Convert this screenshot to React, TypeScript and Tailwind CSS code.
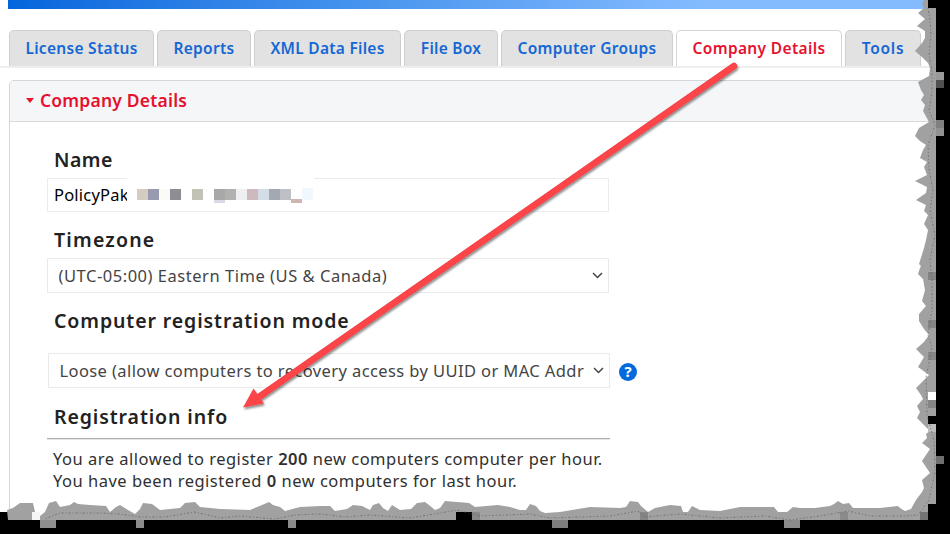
import React from "react";

const tabs = [
  { label: "License Status", box: "w-[145px]", tone: "tracking-[0.3px]" },
  { label: "Reports", box: "w-[94px]", tone: "tracking-[0.3px]" },
  { label: "XML Data Files", box: "w-[147px]", tone: "tracking-[0.27px]" },
  { label: "File Box", box: "w-[94px]", tone: "tracking-[0.25px]" },
  { label: "Computer Groups", box: "w-[172px]", tone: "tracking-[0.3px]" },
  { label: "Company Details", box: "w-[166px]", tone: "tracking-[0.35px]", active: true },
  { label: "Tools", box: "w-[76px]", tone: "tracking-[0.75px]" },
];

const redaction: [number, number, number, number, string][] = [
  [10, 11, 11, 11, "#d3ccc0"],
  [21, 11, 11, 11, "#989bb0"],
  [32, 11, 11, 11, "#fafaf7"],
  [43, 11, 11, 11, "#8e8d92"],
  [65, 11, 11, 11, "#c3c2b7"],
  [87, 11, 11, 11, "#a9a8a8"],
  [98, 11, 11, 11, "#b1b1b1"],
  [109, 11, 11, 11, "#eeeef3"],
  [120, 11, 11, 11, "#cdb9be"],
  [131, 11, 11, 11, "#d2dde8"],
  [142, 11, 11, 11, "#a4a8b2"],
  [153, 11, 11, 11, "#bfc0c5"],
  [175, 10, 11, 12, "#f0f8fe"],
  [87, 22, 11, 3, "#d9dae8"],
  [164, 21, 11, 4, "#cdb7b0"],
];

const tornInner =
  "M924 0 L922 4 L924 8 L918 13 L925 19 L917 26 L925 31 L925 38 L922 43 L915 51 L922 57 L928 63 L930 68 L929 76 L918 82 L921 90 L924 95 L921 100 L925 105 L923 111 L929 122 L919 128 L915 136 L920 141 L926 145 L923 150 L920 158 L927 162 L924 167 L927 175 L915 181 L927 187 L926 193 L916 200 L926 205 L924 211 L928 215 L924 224 L928 230 L926 240 L924 248 L919 264 L921 266 L920 268 L918 274 L923 279 L925 290 L922 301 L926 306 L919 314 L919 321 L924 329 L929 335 L924 342 L916 349 L924 357 L918 367 L929 375 L920 384 L916 388 L921 395 L923 399 L917 406 L920 412 L917 418 L926 427 L930 431 L926 434 L927 438 L922 443 L930 449 L922 461 L930 473 L922 480 L924 488 L922 492 L916 500 L911 509 L905 511 L900 508 L898 506 L880 508 L870 508 L853 508 L849 503 L843 504 L838 501 L834 504 L830 506 L815 508 L800 508 L793 507 L787 512 L778 512 L774 507 L740 507 L720 511 L700 510 L692 506 L688 512 L683 512 L681 506 L670 505 L655 508 L648 512 L641 506 L638 502 L630 501 L626 507 L620 508 L590 507 L560 512 L545 513 L540 511 L536 506 L530 504 L526 510 L520 510 L510 507 L498 505 L475 507 L469 503 L445 501 L440 508 L435 510 L429 505 L425 502 L417 503 L411 509 L400 510 L392 505 L388 511 L383 508 L379 503 L373 505 L370 510 L362 506 L353 505 L347 509 L335 511 L330 506 L320 506 L300 507 L285 511 L280 507 L273 505 L269 502 L262 505 L250 510 L220 509 L200 507 L195 502 L185 503 L180 508 L160 510 L152 504 L143 503 L140 509 L135 514 L128 510 L120 505 L116 507 L110 512 L106 506 L90 505 L78 504 L74 502 L70 505 L60 507 L56 501 L49 503 L45 512 L40 516 L35 512 L33 503 L20 503 L13 508 L7 510";

const blocks: [number, number, number, number, string][] = [
  [936, 72, 8, 8, "#9a9a9a"],
  [936, 80, 8, 8, "#505050"],
  [936, 120, 8, 8, "#808080"],
  [936, 128, 8, 8, "#919191"],
  [936, 456, 8, 8, "#6f6f6f"],
  [928, 272, 8, 8, "#838383"],
  [928, 320, 8, 8, "#858585"],
  [928, 352, 8, 8, "#868686"],
  [928, 392, 8, 8, "#ffffff"],
  [928, 400, 8, 8, "#858585"],
  [928, 416, 8, 8, "#000000"],
  [928, 424, 8, 8, "#bdbdbd"],
  [920, 512, 8, 8, "#747474"],
  [40, 520, 16, 8, "#8e8e8e"],
  [136, 520, 8, 8, "#8b8b8b"],
  [288, 520, 8, 8, "#8b8b8b"],
  [552, 520, 16, 8, "#7e7e7e"],
  [784, 520, 16, 8, "#8b8b8b"],
  [456, 512, 16, 8, "#000000"],
  [472, 512, 8, 8, "#888888"],
  [640, 512, 8, 8, "#868686"],
  [840, 512, 8, 8, "#8a8a8a"],
  [32, 512, 8, 8, "#f5f5f5"],
];

function Tabs() {
  return (
    <nav className="mt-[21px] flex h-[38px] gap-[3px] border-b-2 border-[#eeeeee] pl-[9px]">
      {tabs.map((t) => (
        <div
          key={t.label}
          className={`flex h-9 shrink-0 justify-center rounded-t-[5px] border border-b-0 pt-[5px] text-[15.5px] leading-6 font-semibold whitespace-nowrap ${t.box} ${t.tone} ${
            t.active ? "border-[#d6d6d6] bg-white text-[#e6112f]" : "border-[#cfcfcf] bg-[#e2e2e2] text-[#1567d3]"
          }`}
        >
          <span>{t.label}</span>
        </div>
      ))}
    </nav>
  );
}

function Heading({ children, className }: { children: React.ReactNode; className: string }) {
  return <h3 className={`ml-[7px] h-6 text-[19.5px] leading-[26px] font-semibold whitespace-nowrap text-[#222222] ${className}`}>{children}</h3>;
}

function Select({ children, className }: { children: React.ReactNode; className: string }) {
  return (
    <div className={`flex h-[35px] w-[562px] shrink-0 items-center border border-[#eaeaea] bg-white pl-[10.5px] pr-[5px] text-[16.5px] leading-6 text-[#444444] ${className}`}>
      <span className="w-[524px] overflow-hidden whitespace-nowrap">{children}</span>
      <svg className="ml-auto" width="11" height="7" viewBox="0 0 11 7" fill="none">
        <path d="M1 1 L5.500 5.500 L10 1" stroke="#444" strokeWidth="1.500" />
      </svg>
    </div>
  );
}

function TornEdge() {
  return (
    <svg className="pointer-events-none absolute inset-0" width="950" height="534" viewBox="0 0 950 534">
      <path d="M0 512 H8 V520 H928 V504 H936 V8 H928 V0 H950 V534 H0 Z" fill="#000" />
      <path d={`${tornInner} L8 520 H928 V504 H936 V8 H928 V0 Z`} fill="#a1a1a1" />
      {blocks.map(([x, y, w, h, fill]) => (
        <rect key={`${x}-${y}`} x={x} y={y} width={w} height={h} fill={fill} />
      ))}
      <path
        d="M928 8 L930 20 L931 35 L929 55 L932 70 L932 92 L929 110 L935 125 L928 145 L929 170 L933 190 L930 210 L935 235 L930 260 L932 280 L932 310 L928 335 L932 348 L926 378 L927 415 L934 440 L935 472 L929 500 L918 515 L905 516 H870 L848 511 L820 516 L790 520 L765 516 L720 518 L680 514 L645 517 L638 511 L610 516 L550 518 L530 514 L480 516 L457 510 L440 513 L410 518 L370 515 L345 517 L320 514 L295 515 L275 519 L240 516 L220 518 L195 512 L165 517 L140 517 L120 514 L100 513 L60 513 L45 519"
        fill="none"
        stroke="#555"
        strokeWidth="0.6"
        strokeDasharray="1 2 2 2"
      />
    </svg>
  );
}

function Arrow() {
  return (
    <svg className="pointer-events-none absolute inset-0" width="950" height="534" viewBox="0 0 950 534">
      <defs>
        <filter id="arrow-shadow" x="-10%" y="-10%" width="120%" height="120%">
          <feDropShadow dx="1" dy="2" stdDeviation="1.1" floodColor="#000" floodOpacity="0.45" />
        </filter>
      </defs>
      <g filter="url(#arrow-shadow)">
        <path d="M256 399 L734 66" stroke="#f04045" strokeWidth="6.4" strokeLinecap="round" />
        <path d="M243 407.500 L253.500 388.500 L264 403.500 Z" fill="#fb4448" />
        <path d="M256 399 L734 66" stroke="#fb4448" strokeWidth="5.400" strokeLinecap="round" />
      </g>
    </svg>
  );
}

export default function App() {
  return (
    <main className="relative h-[534px] w-[950px] overflow-hidden bg-white font-['Noto_Sans',sans-serif]">
      <div className="ml-2 h-[9px] w-[920px] bg-linear-to-r from-[#0265dc] via-[#4090ec] via-35% to-[#84bbff] to-75%" />
      <Tabs />
      <section className="mt-3 ml-[9px] h-[454px] w-[960px] rounded-tl-[5px] border border-[#d3d7d9]">
        <header className="flex h-[41px] items-center rounded-tl-[4px] border-b border-[#d8dbdd] bg-[#f4f6f8] pb-[2px] pl-4">
          <span className="h-0 w-0 border-x-[4.500px] border-t-[5px] border-x-transparent border-t-[#e6172d]" />
          <h2 className="ml-[6px] text-[17.5px] leading-6 font-semibold tracking-[0.2px] text-[#e6112f]">Company Details</h2>
        </header>
        <div className="flex flex-col pl-[37px]">
          <Heading className="mt-[25px] tracking-[0.5px]">Name</Heading>
          <div className="relative mt-[7px] flex h-[34px] w-[562px] items-center border border-[#ebebeb] pl-[6px] text-[16.5px] tracking-[0.2px] text-black">
            <span className="w-[76px] whitespace-nowrap">PolicyPak</span>
            <div className="absolute -top-px left-[79px] h-[30px] w-[187px] bg-white">
              <svg width="187" height="30" viewBox="0 0 187 30" shapeRendering="crispEdges">
                {redaction.map(([x, y, w, h, fill]) => (
                  <rect key={`${x}-${y}`} x={x} y={y} width={w} height={h} fill={fill} />
                ))}
              </svg>
            </div>
          </div>
          <Heading className="mt-[15px] tracking-[1.2px]">Timezone</Heading>
          <Select className="mt-[7px] tracking-[0.53px]">(UTC-05:00) Eastern Time (US &amp; Canada)</Select>
          <Heading className="mt-[15px] tracking-[0.9px]">Computer registration mode</Heading>
          <div className="mt-[21px] ml-px flex items-center">
            <Select className="tracking-[0.4px]">Loose (allow computers to recovery access by UUID or MAC Address)</Select>
            <span className="mt-[2px] ml-[9px] flex h-[18px] w-[18px] items-center justify-center rounded-full bg-[#0469dc] text-[15px] font-bold text-white">?</span>
          </div>
          <Heading className="mt-4 tracking-[0.9px]">Registration info</Heading>
          <hr className="mt-[10px] h-[2px] w-[563px] border-t border-b border-t-[#b0b0b0] border-b-[#e4e4e4]" />
          <div className="mt-2 ml-[6px] text-[16.5px] leading-[22px] whitespace-nowrap text-[#303030]">
            <p className="tracking-[0.5px]">You are allowed to register <b className="font-semibold">200</b> new computers computer per hour.</p>
            <p className="tracking-[0.5px]">You have been registered <b className="font-semibold">0</b> new computers for last hour.</p>
          </div>
        </div>
      </section>
      <Arrow />
      <TornEdge />
    </main>
  );
}
